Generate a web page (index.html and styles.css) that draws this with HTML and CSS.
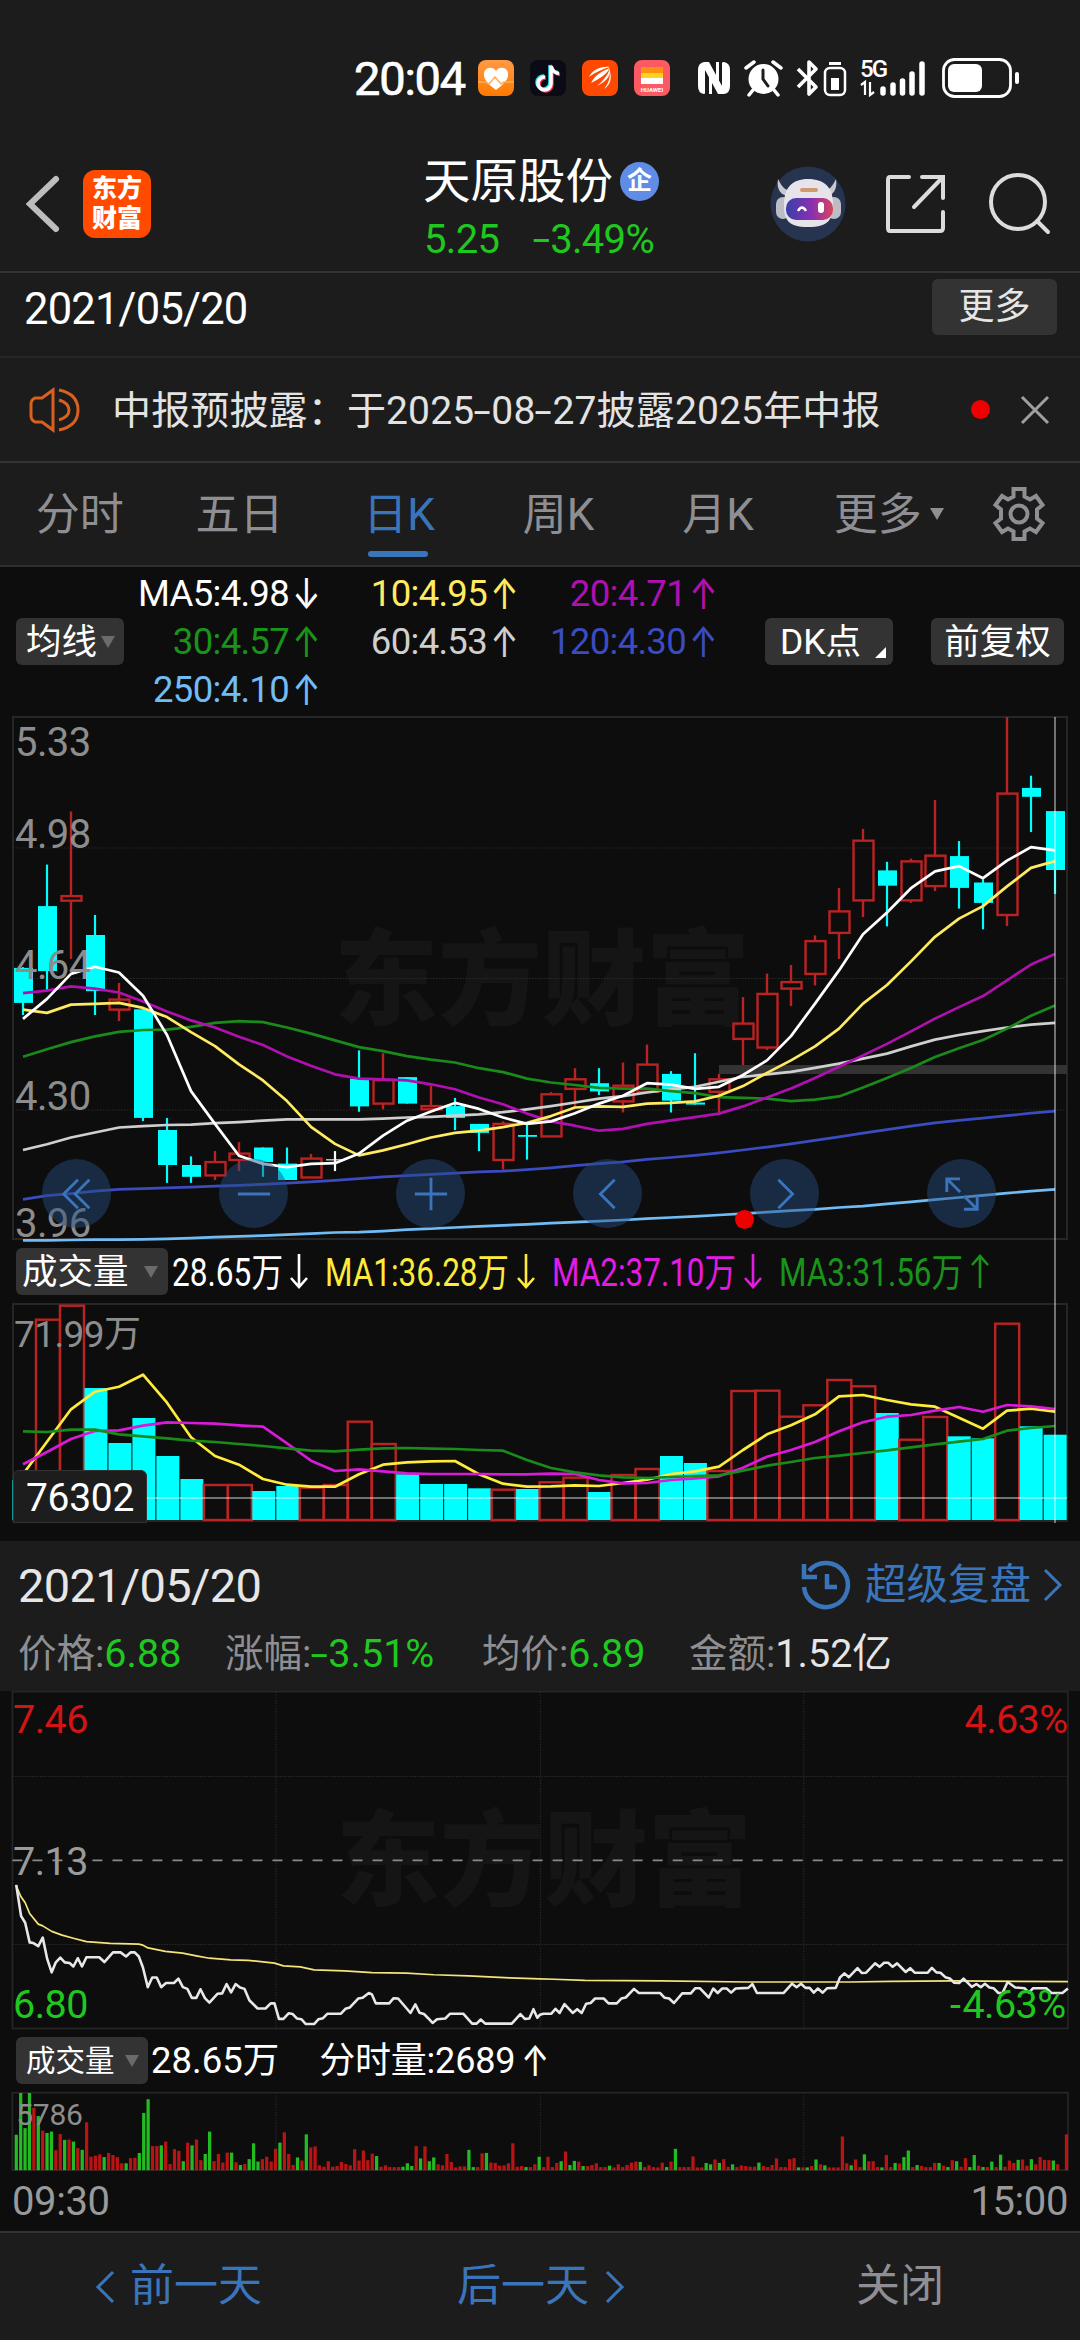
FILE: index.html
```html
<!doctype html>
<html lang="zh-CN">
    <head>
        <meta charset="UTF-8" />
        <meta name="viewport" content="width=device-width, initial-scale=1.0" />
        <title>天原股份 5.25 -3.49%</title>
        <link rel="stylesheet" href="styles.css">
    </head>
    <body>
        <!-- Status bar -->
        <div class="status">
            <span class="clock">20:04</span>
            <div class="apps">
                <svg width="36" height="36" viewBox="0 0 36 36">
                    <defs><linearGradient id="health" x1="0" y1="0" x2="0" y2="1"><stop offset="0" stop-color="#ff9a45" /><stop offset="1" stop-color="#ff7a00" /></linearGradient></defs>
                    <rect width="36" height="36" rx="8" fill="url(#health)" />
                    <path d="M18 30C10 24 5 19 6 13c1-6 9-7 12-2 3-5 11-4 12 2 1 6-4 11-12 17z" fill="#fff" />
                    <path d="M0 22h8l3 2 6-7 6 7 3-2h10" fill="none" stroke="#ffb060" stroke-width="1.6" />
                </svg>
                <svg width="36" height="36" viewBox="0 0 36 36">
                    <rect width="36" height="36" rx="8" fill="#0b0b16" />
                    <g fill="none" stroke-width="3.600">
                        <path d="M14 16a6.500 6.500 0 1 0 6 6.500V5c1 5 4 7 8 7.500" stroke="#25e0e6" />
                        <path d="M16 18a6.500 6.500 0 1 0 6 6.500V7c1 5 4 7 8 7.500" stroke="#fb2a55" />
                        <path d="M15 17a6.500 6.500 0 1 0 6 6.500V6c1 5 4 7 8 7.500" stroke="#fff" />
                    </g>
                </svg>
                <svg width="36" height="36" viewBox="0 0 36 36">
                    <rect width="36" height="36" rx="8" fill="#ff4800" />
                    <path d="M7 17C10 10 19 6 28 7c-8 2-14 5-21 10zM9 23c4-8 11-12 19-15-4 7-11 11-19 15zM15 26c6-5 10-10 13-17 1 8-5 13-13 17zM22 29c4-5 6-10 6-17 2 7 0 13-6 17z" fill="#fff" />
                </svg>
                <svg width="36" height="36" viewBox="0 0 36 36">
                    <rect width="36" height="36" rx="8" fill="#fb5a62" />
                    <path d="M7 7h22v6H7z" fill="#ff9014" /><path d="M7 13h22v5H7z" fill="#ffd21c" /><path d="M7 18h22v6H7z" fill="#fff" />
                    <text x="18" y="31.500" class="tiny">HUAWEI</text>
                </svg>
            </div>
            <svg class="sys" width="330" height="44" viewBox="0 0 330 44">
                <!-- nfc -->
                <path d="M8 6q-6 1-6 8v16q0 7 6 8 1 0 1-1V14l13 24h6q6-1 6-8V14q0-7-6-8-2 0-2 1v23L13 6z" fill="#fff" />
                <path d="M13 12v26h3V18zM20 6v20l3 6V6z" fill="#fff" />
                <!-- alarm -->
                <circle cx="67.500" cy="23" r="15" fill="#fff" />
                <path d="M50 12l8-6M77 6l8 6M57 34l-4 5M78 34l4 5" stroke="#fff" stroke-width="3.500" stroke-linecap="round" />
                <path d="M67 14v9l5 7" fill="none" stroke="#1c1c1c" stroke-width="3" stroke-linecap="round" />
                <!-- bluetooth -->
                <path d="M102 13l18 18-7 7V6l7 7-18 18" fill="none" stroke="#fff" stroke-width="3.600" stroke-linejoin="round" />
                <rect x="129" y="12" width="20" height="27" rx="5" fill="none" stroke="#fff" stroke-width="2.500" />
                <path d="M133 6h12v3h-12zM135 22h8v12h-8z" fill="#fff" />
                <!-- signal -->
                <text x="164" y="21" class="net">5G</text>
                <path d="M165 29l4-3v13M174 26v13l4-3" fill="none" stroke="#fff" stroke-width="2.200" />
                <path d="M187 33v4M197 29v8M206.500 25v12M216 18v19M226 8v29" stroke="#fff" stroke-width="5.500" stroke-linecap="round" />
                <!-- battery -->
                <rect x="247.500" y="3.500" width="67" height="37" rx="11" fill="none" stroke="#fff" stroke-width="2.800" />
                <rect x="252" y="8" width="34" height="28" rx="6" fill="#fff" />
                <rect x="319" y="16" width="4" height="12" rx="2" fill="#fff" />
            </svg>
        </div>

        <!-- Title bar -->
        <header class="header">
            <svg class="back" width="36" height="60" viewBox="0 0 36 60"><path d="M31 5L5 30l26 25" /></svg>
            <div class="logo">东方<br>财富</div>
            <div class="title">
                <div class="name">天原股份<span class="ent">企</span></div>
                <div class="price"><span>5.25</span><span><u>-</u>3.49%</span></div>
            </div>
            <svg class="robot" width="76" height="76" viewBox="0 0 76 76">
                <defs><linearGradient id="visor"><stop offset="0" stop-color="#3b3fa8" /><stop offset=".55" stop-color="#8a2fb0" /><stop offset="1" stop-color="#d8455c" /></linearGradient></defs>
                <circle cx="38" cy="38" r="37.500" fill="#26344f" />
                <path d="M8 13c-2 11 4 18 13 17l2-5c-8 0-11-4-15-12zM66 13c2 11-4 18-12 17l-2-5c7 0 10-4 14-12z" fill="#c9c9cf" />
                <rect x="6" y="31" width="14" height="22" rx="7" fill="#bdbdc6" />
                <rect x="57" y="31" width="14" height="22" rx="7" fill="#bdbdc6" />
                <path d="M38 13c17 0 25 9 25 25 0 15-4 23-25 23S14 53 14 38c0-16 8-25 24-25z" fill="#e6e4ea" />
                <rect x="30" y="22" width="18" height="4" rx="2" fill="#cf9a70" />
                <rect x="16" y="32" width="47" height="22" rx="10" fill="url(#visor)" />
                <path d="M28 45q4-7 8 0" fill="none" stroke="#fff" stroke-width="2.500" />
                <rect x="48" y="36" width="6" height="11" rx="3" fill="#fff" />
            </svg>
            <svg class="tool" width="62" height="62" viewBox="0 0 62 62"><path d="M24 4H5q-2 0-2 3v48q0 3 2 3h50q3 0 3-3V39M37 4h21v21M57 5L29 34" /></svg>
            <svg class="tool find" width="62" height="62" viewBox="0 0 62 62"><circle cx="29" cy="29" r="27" /><path d="M48 48l11 11" /></svg>
        </header>

        <div class="daterow">
            <span>2021/05/20</span>
            <button class="more">更多</button>
        </div>

        <div class="notice">
            <svg class="horn" width="52" height="46" viewBox="0 0 52 46"><path d="M24 3L13 11H6q-4 2-4 6v12q0 4 4 6h7l11 8zM30 13q10 3 10 10T30 33M30 3q19 4 19 20T30 43" /></svg>
            <span class="msg">中报预披露：于2025<u>-</u>08<u>-</u>27披露2025年中报</span>
            <i class="dot"></i>
            <svg class="close" width="30" height="30" viewBox="0 0 30 30"><path d="M2 2l26 26M28 2L2 28" /></svg>
        </div>

        <nav class="tabs">
            <a>分时</a><a>五日</a><a class="on">日K</a><a>周K</a><a>月K</a><a>更多<i class="tri"></i></a>
            <svg width="54" height="54" viewBox="0 0 54 54">
                <path d="M21.500 2h11v7.500l5.500 3 6-3.500 6.500 9-5.500 4.500v9l5.500 4.500-6.500 9-6-3.500-5.500 3V52h-11v-7.500l-5.500-3-6 3.500-6.500-9L9 31.500v-9L3.500 18l6.500-9 6 3.500 5.500-3z" />
                <circle cx="27" cy="27" r="8.500" />
            </svg>
        </nav>

        <!-- Moving averages -->
        <section class="ma">
            <button class="chip">均线<i class="tri"></i></button>
            <div class="avgs">
                <span class="white">MA5:4.98<b>↓</b></span><span class="yellow">10:4.95<b>↑</b></span><span class="purple">20:4.71<b>↑</b></span>
                <span class="green">30:4.57<b>↑</b></span><span class="gray">60:4.53<b>↑</b></span><span class="blue">120:4.30<b>↑</b></span>
                <span class="sky">250:4.10<b>↑</b></span>
            </div>
            <button class="chip dk">DK点<i class="corner"></i></button>
            <button class="chip fq">前复权</button>
        </section>

        <section class="charts">
            <svg id="kline" width="1080" height="524" viewBox="0 0 1080 524"></svg>
            <div class="vlegend">
                <button class="chip">成交量<i class="tri"></i></button>
                <svg width="900" height="63" viewBox="0 0 900 63">
                    <g class="squeeze">
                        <text x="2" y="46" textLength="111" lengthAdjust="spacingAndGlyphs" fill="#fff">28.65万</text>
                        <text x="155" y="46" textLength="184" lengthAdjust="spacingAndGlyphs" fill="#ffeb3b">MA1:36.28万</text>
                        <text x="382" y="46" textLength="184" lengthAdjust="spacingAndGlyphs" fill="#e31be3">MA2:37.10万</text>
                        <text x="609" y="46" textLength="184" lengthAdjust="spacingAndGlyphs" fill="#1a931a">MA3:31.56万</text>
                    </g>
                    <g fill="none" stroke-width="2.600">
                        <path d="M129 14v33M121 38l8 9 8-9" stroke="#fff" />
                        <path d="M356 14v33M348 38l8 9 8-9" stroke="#ffeb3b" />
                        <path d="M583 14v33M575 38l8 9 8-9" stroke="#e31be3" />
                        <path d="M810 48V15M802 25l8-9 8 9" stroke="#1a931a" />
                    </g>
                </svg>
            </div>
            <svg id="volume" width="1080" height="238" viewBox="0 0 1080 238"></svg>
            <div class="cross"></div>
            <div class="tag">76302</div>
            <div class="pad">
                <button><svg viewBox="0 0 40 40"><path d="M21 5L6 20l15 15M33 5L18 20l15 15" /></svg></button>
                <button><svg viewBox="0 0 40 40"><path d="M3 20h34" /></svg></button>
                <button><svg viewBox="0 0 40 40"><path d="M3 20h34M20 3v34" /></svg></button>
                <button><svg viewBox="0 0 40 40"><path d="M27 5L12 20l15 15" /></svg></button>
                <button><svg viewBox="0 0 40 40"><path d="M13 5l15 15-15 15" /></svg></button>
                <button><svg viewBox="0 0 40 40"><path d="M4 18V4h14M4 4l14 14M36 22v14H22M22 22l14 14" /></svg></button>
            </div>
            <i class="dot mark"></i>
        </section>

        <!-- Replay of the selected day -->
        <section class="panel">
            <div class="line">
                <span class="day">2021/05/20</span>
                <a class="replay">
                    <svg width="50" height="50" viewBox="0 0 50 50"><path d="M3 27a22 22 0 1 0 5-16M3 4v13h13" /><path d="M26 14v13h10" /></svg>
                    超级复盘
                    <svg width="20" height="34" viewBox="0 0 20 34" class="thin"><path d="M2 2l15 15L2 32" /></svg>
                </a>
            </div>
            <div class="stats">
                <span>价格:<em>6.88</em></span>
                <span>涨幅:<em><u>-</u>3.51%</em></span>
                <span>均价:<em>6.89</em></span>
                <span>金额:<em class="plain">1.52亿</em></span>
            </div>
        </section>

        <svg id="minute" width="1080" height="338" viewBox="0 0 3136 981.500"></svg>
        <div class="mlegend">
            <button class="chip">成交量<i class="tri"></i></button>
            <span>28.65万</span>
            <span class="second">分时量:2689<b>↑</b></span>
        </div>
        <svg id="ticks" width="1080" height="79" viewBox="0 0 3136 229.400"></svg>
        <div class="axis"><span>09:30</span><span>15:00</span></div>

        <footer class="footer">
            <a class="prev"><svg width="20" height="34" viewBox="0 0 20 34"><path d="M17 2L2 17l15 15" /></svg>前一天</a>
            <a class="next">后一天<svg width="20" height="34" viewBox="0 0 20 34"><path d="M2 2l15 15L2 32" /></svg></a>
            <a class="shut">关闭</a>
        </footer>

        <script src="charts.js"></script>
    </body>
</html>
```
FILE: styles.css
```css
* {
    box-sizing: border-box;
}
body {
    margin: 0;
    width: 1080px;
    height: 2340px;
    overflow: hidden;
    background-color: #0d0d0d;
    color: #fff;
    font-family: Roboto, "Noto Sans CJK SC", sans-serif;
    font-size: 40px;
}
svg {
    display: block;
    flex: none;
    overflow: visible;
}
button {
    font-family: inherit;
    border: none;
    padding: 0;
    color: inherit;
}
i,
em,
b {
    font-style: normal;
    font-weight: normal;
}
b {
    font-family: Inter, sans-serif;
}
/* wide minus sign */
u {
    display: inline-block;
    width: 17px;
    text-decoration: none;
    transform: scaleX(1.6);
    transform-origin: 1px 50%;
}

/* Status bar */
.status {
    display: flex;
    align-items: center;
    height: 136px;
    padding: 20px 0 0 354px;
    background-color: #1c1c1c;
}
.clock {
    width: 124px;
    font-size: 47px;
    letter-spacing: -1.2px;
    -webkit-text-stroke: .7px #fff;
}
.apps {
    display: flex;
    gap: 16px;
    width: 218px;
}
.tiny {
    font-size: 6px;
    font-weight: bold;
    fill: #fff;
    text-anchor: middle;
}
.net {
    font-size: 24px;
    font-weight: 500;
    fill: #fff;
    letter-spacing: -2px;
}

/* Title bar */
.header {
    display: flex;
    align-items: center;
    height: 137px;
    padding: 0 27px 0 25px;
    background-color: #1c1c1c;
    border-bottom: 2px solid #333;
}
.back path {
    fill: none;
    stroke: #bdbdbd;
    stroke-width: 6;
    stroke-linecap: round;
}
.logo {
    width: 68px;
    height: 68px;
    margin: 0 0 0 22px;
    padding-top: 4px;
    border-radius: 12px;
    background-color: #ff4a00;
    font-size: 25px;
    font-weight: 900;
    line-height: 30px;
    text-align: center;
}
.title {
    width: 240px;
    margin-left: 272px;
    height: 136px;
}
.name {
    display: flex;
    align-items: center;
    font-size: 47.5px;
    line-height: 60px;
    padding-top: 16px;
    white-space: nowrap;
}
.ent {
    width: 39px;
    height: 39px;
    margin-left: 7px;
    border-radius: 50%;
    background-color: #5f8de6;
    font-size: 25px;
    font-weight: bold;
    line-height: 37px;
    text-align: center;
}
.price {
    display: flex;
    gap: 34px;
    padding-left: 1px;
    font-size: 40px;
    line-height: 56px;
    color: #1fc81f;
    letter-spacing: -.7px;
}
.robot {
    margin-left: 107px;
}
.tool {
    margin-left: 39px;
}
.find {
    margin-left: 42px;
}
.tool path,
.tool circle {
    fill: none;
    stroke: #dcdcdc;
    stroke-width: 4;
    stroke-linecap: round;
}

/* Date and notice */
.daterow {
    display: flex;
    justify-content: space-between;
    height: 85px;
    padding: 6px 23px 0 24px;
    background-color: #1c1c1c;
    border-bottom: 2px solid #262626;
    font-size: 43.5px;
    line-height: 61px;
    letter-spacing: -.8px;
}
.more {
    width: 125px;
    height: 56px;
    border-radius: 6px;
    background-color: #333;
    color: #e6e6e6;
    font-size: 36px;
    line-height: 52px;
}
.notice {
    display: flex;
    align-items: center;
    height: 105px;
    padding: 0 30px 0 29px;
    background-color: #1c1c1c;
    border-bottom: 2px solid #333;
    color: #e3e3e3;
    font-size: 39px;
}
.horn path {
    fill: none;
    stroke: #d9601e;
    stroke-width: 3;
}
.msg {
    flex: 1;
    padding: 0 0 6px 31px;
    white-space: nowrap;
    letter-spacing: .15px;
}
.dot {
    width: 19px;
    height: 19px;
    border-radius: 50%;
    background-color: #ee0000;
}
.close {
    margin-left: 30px;
}
.close path {
    stroke: #a0a0a0;
    stroke-width: 3;
}

/* Tabs */
.tabs {
    display: flex;
    align-items: center;
    height: 104px;
    background-color: #1c1c1c;
    border-bottom: 2px solid #2e2e2e;
    color: #8e8e93;
    font-size: 44px;
}
.tabs a {
    position: relative;
    width: 159.6px;
    height: 100%;
    line-height: 105px;
    text-align: center;
}
.tabs .on {
    color: #3a75bb;
}
.tabs .on::after {
    content: "";
    position: absolute;
    left: 49px;
    bottom: 8px;
    width: 60px;
    height: 6px;
    border-radius: 3px;
    background-color: #3a75bb;
}
.tabs svg {
    margin-left: 34px;
    fill: none;
    stroke: #8e8e93;
    stroke-width: 4;
}
.tri {
    display: inline-block;
    border: 7.5px solid transparent;
    border-top: 12px solid #6b6b6b;
    border-bottom: none;
}
.tabs .tri {
    position: absolute;
    top: 45px;
    left: 132px;
    border-top-color: #8e8e93;
}

/* Moving averages */
.chip {
    display: flex;
    align-items: center;
    height: 47px;
    border-radius: 6px;
    background-color: #333;
    font-size: 35.5px;
    line-height: 44px;
    white-space: nowrap;
}
.ma {
    display: flex;
    align-items: center;
    height: 149px;
    padding: 0 16px;
}
.ma .chip:first-child {
    width: 108px;
    padding-left: 10px;
    gap: 4px;
}
.avgs {
    display: grid;
    grid-template-columns: 196px 198px 199px;
    grid-auto-rows: 48px;
    width: 641px;
    font-size: 36.5px;
    line-height: 48px;
    letter-spacing: -.7px;
}
.avgs span {
    display: flex;
    justify-content: flex-end;
    white-space: nowrap;
}
.avgs b,
.mlegend b {
    width: 31px;
    text-align: right;
    font-size: 34px;
    transform: scaleY(1.25);
}
.white { color: #fff; }
.yellow { color: #ffeb62; }
.purple { color: #b010b0; }
.green { color: #1a931a; }
.gray { color: #cfcfcf; }
.blue { color: #3a4cc0; }
.sky { color: #72bcf5; }
.dk {
    position: relative;
    width: 128px;
    padding-left: 15px;
}
.corner {
    position: absolute;
    right: 7px;
    bottom: 7px;
    border-left: 11px solid transparent;
    border-bottom: 11px solid #fff;
}
.fq {
    width: 133px;
    margin-left: 38px;
    justify-content: center;
}

/* Charts */
.charts {
    position: relative;
}
.scale {
    font-size: 40px;
    fill: #8d8d8d;
    letter-spacing: -.6px;
}
.frame {
    fill: none;
    stroke: #262626;
    stroke-width: 2;
}
.water {
    font-size: 104px;
    font-weight: 900;
    fill: #151515;
}
.vlegend {
    display: flex;
    align-items: center;
    height: 63px;
    padding-left: 16px;
}
.vlegend .chip {
    width: 152px;
    padding: 0 10px 0 6px;
    justify-content: space-between;
}
.vlegend svg {
    margin-left: 2px;
}
.squeeze {
    font-size: 39px;
}
.cross {
    position: absolute;
    left: 1054px;
    top: 1px;
    width: 2px;
    height: 806px;
    background-color: rgba(255, 255, 255, .42);
}
.tag {
    position: absolute;
    left: 13px;
    top: 754px;
    width: 134px;
    height: 53px;
    padding-left: 12px;
    border: 1px solid #333;
    border-radius: 6px 6px 0 0;
    background-color: #1d1d1d;
    font-size: 39px;
    line-height: 54px;
    letter-spacing: -.3px;
}
.pad {
    position: absolute;
    left: 42px;
    top: 443px;
    display: flex;
    gap: 108px;
}
.pad button {
    width: 69px;
    height: 69px;
    border-radius: 50%;
    background-color: rgba(38, 78, 128, .48);
}
.pad svg {
    width: 38px;
    height: 38px;
    margin: 0 auto;
    fill: none;
    stroke: #3a75bb;
    stroke-width: 3;
}
.mark {
    position: absolute;
    left: 735px;
    top: 494px;
}

/* Day panel */
.panel {
    height: 150px;
    background-color: #1c1c1c;
    padding: 13px 17px 0 18px;
}
.line {
    display: flex;
    justify-content: space-between;
    align-items: center;
    height: 62px;
}
.day {
    font-size: 47px;
    color: #e6e6e6;
    letter-spacing: -.7px;
}
.replay {
    display: flex;
    align-items: center;
    gap: 14px;
    height: 60px;
    line-height: 58px;
    color: #3a75bb;
    font-size: 41.5px;
}
.replay svg {
    fill: none;
    stroke: #3a75bb;
    stroke-width: 4.5;
}
.replay .thin,
.footer svg {
    stroke-width: 3;
}
.replay .thin {
    margin-left: -2px;
}
.stats {
    display: flex;
    height: 66px;
    line-height: 75px;
    font-size: 38.5px;
    color: #8e8e93;
}
.stats span {
    width: 207px;
    white-space: nowrap;
}
.stats span:nth-child(2) {
    width: 257px;
}
.stats em {
    color: #1fc81f;
    font-size: 39.5px;
}
.stats .plain {
    color: #e6e6e6;
}

/* Minute chart */
.mlegend {
    display: flex;
    align-items: center;
    height: 63px;
    padding-left: 16px;
    font-size: 36.5px;
    line-height: 56px;
}
.mlegend .chip {
    width: 132px;
    padding: 0 9px 0 10px;
    margin-right: 3px;
    justify-content: space-between;
    font-size: 29.5px;
}
.mlegend .second {
    display: flex;
    margin-left: 40px;
    font-size: 36px;
    letter-spacing: -.2px;
}
.mlegend b {
    width: 34px;
    line-height: 56px;
}
.axis {
    display: flex;
    justify-content: space-between;
    height: 60px;
    padding: 0 12px;
    color: #9a9a9a;
    line-height: 61px;
    letter-spacing: -.4px;
}

.footer {
    display: flex;
    align-items: center;
    height: 109px;
    background-color: #1c1c1c;
    border-top: 2px solid #333;
    color: #3a75bb;
    font-size: 44px;
    line-height: 101px;
}
.footer a {
    display: flex;
    align-items: center;
    gap: 14px;
    height: 107px;
}
.footer svg {
    fill: none;
    stroke: #3a75bb;
}
.footer .prev {
    width: 361px;
    padding-left: 96px;
}
.footer .next {
    width: 495px;
    padding-left: 96px;
    gap: 16px;
}
.footer .shut {
    color: #8e8e93;
}
```
FILE: charts.js
```js
const RED = "#b92323";
const CYAN = "#00ffff";

const CANDLES = `c748,750,848,882 c461,577,759,812 r312,549,562,725 c602,658,815,882 r792,839,867,899 c866,866,1170,1179
c1170,1204,1302,1352 c1278,1302,1335,1352 r1263,1294,1331,1344 r1238,1270,1288,1319 c1253,1253,1294,1335 c1253,1298,1344,1344
r1271,1284,1337,1337 w1263,1286,1289,1319 c981,1060,1138,1153 r989,1064,1130,1146 c1056,1056,1130,1130 r1080,1137,1146,1146
c1114,1137,1170,1204 c1187,1187,1212,1263 r1180,1187,1288,1315 c1187,1218,1223,1287 r1098,1104,1222,1222 r1031,1062,1089,1139
c1031,1073,1096,1106 r1015,1080,1124,1155 r965,1021,1097,1097 c1039,1047,1122,1155 c989,1127,1133,1133 r1047,1062,1097,1155
r832,906,949,1022 r766,823,973,980 r742,790,808,857 r659,675,767,799 r526,592,652,725 r361,394,561,608 c453,477,520,634
r444,452,561,568 r280,436,521,535 c395,437,526,584 c502,511,568,642 r48,262,602,633 c212,246,271,370 c311,311,476,543`;

const AVERAGES = [
    ["#ffffff", [893,837,767,747,763,828,938,1095,1187,1276,1299,1308,1299,1297,1270,1220,1178,1152,1128,1145,1169,1187,1180,1157,1130,1108,1073,1077,1089,1083,1050,1009,941,850,757,656,595,527,480,465,499,450,412,421]],
    ["#ffeb62", [867,876,853,851,848,862,888,930,969,1020,1065,1123,1195,1243,1275,1261,1244,1225,1212,1206,1196,1184,1165,1141,1138,1139,1130,1128,1124,1108,1081,1044,1009,970,920,850,798,732,663,612,577,522,470,451]],
    ["#b010b0", [821,814,802,808,819,844,872,897,917,943,966,998,1024,1048,1060,1062,1065,1076,1090,1113,1132,1158,1180,1192,1206,1201,1187,1177,1168,1158,1138,1113,1088,1058,1027,995,963,928,892,860,829,785,741,711]],
    ["#1a8a1a", [999,978,958,942,929,924,923,915,904,899,902,917,934,953,972,983,997,1007,1015,1031,1042,1060,1071,1078,1086,1088,1088,1095,1101,1112,1114,1116,1123,1119,1110,1085,1058,1030,1000,975,952,920,884,855]],
    ["#cfcfcf", [1260,1244,1225,1211,1197,1193,1190,1189,1185,1182,1178,1174,1174,1174,1174,1172,1169,1167,1164,1160,1154,1146,1137,1127,1116,1109,1099,1090,1083,1069,1055,1048,1041,1030,1018,1004,990,970,951,938,927,917,909,904]],
    ["#3a4cc0", [1398,1388,1382,1375,1370,1368,1366,1364,1361,1359,1356,1353,1349,1345,1340,1335,1332,1328,1325,1321,1319,1315,1310,1304,1298,1293,1286,1281,1275,1268,1260,1252,1243,1233,1223,1213,1203,1193,1184,1177,1171,1164,1157,1151]],
    ["#72bcf5", [1513,1513,1512,1511,1511,1510,1509,1507,1504,1502,1500,1497,1494,1491,1490,1487,1483,1480,1477,1474,1471,1468,1465,1462,1459,1456,1452,1449,1446,1442,1438,1434,1430,1426,1421,1417,1411,1405,1399,1393,1387,1381,1375,1370]],
];

const VOLUMES = `c720 r236 r194 c444 c609 c534 c648 c717 r732 r732 c753 c738 r740 r732 r542 r609 c703 c732 c732 c745 r746 c747
r724 r710 c756 r702 r684 c648 c669 r690 r450 r449 r527 r493 r417 r436 c519 r596 r528 c589 c595 r248 c559 c584`;

const VOLUME_AVERAGES = [
    ["#ffeb3b", [703,605,508,455,440,404,488,592,648,674,717,734,740,740,703,674,667,664,663,703,731,740,739,736,738,729,719,702,694,680,630,583,556,523,469,465,480,493,500,533,566,512,506,515]],
    ["#d81bd8", [673,636,597,573,571,557,547,549,551,556,560,610,662,693,688,694,700,702,702,702,703,703,701,702,720,730,729,720,715,709,683,650,630,606,574,547,530,525,512,501,515,495,499,507]],
    ["#1a8a1a", [574,576,569,569,583,589,595,602,606,612,618,625,632,634,629,625,624,626,627,630,632,660,684,697,706,712,714,711,708,706,692,677,666,654,647,639,631,622,613,605,597,572,564,558]],
];

// Price and average of the day, one "x,y" per turning point
const PRICE = `47,563 54,608 61,653 73,673 86,730 97,732 111,741 124,716 137,778 150,817 162,788 175,774 188,788 202,790 213,800 226,776
238,800 251,773 288,773 303,787 328,759 350,759 366,771 379,759 391,759 403,771 415,803 429,860 442,832 455,832 468,860 482,848 505,848
518,835 531,860 544,865 557,891 570,891 582,866 595,892 608,905 632,879 645,878 658,851 671,875 684,851 697,861 710,865 724,898 748,922
771,922 786,907 797,907 810,952 823,952 838,936 850,938 862,951 875,953 888,967 912,967 925,953 938,950 951,937 990,937 1003,923
1016,919 1040,893 1053,891 1071,877 1080,881 1091,907 1130,907 1143,892 1156,893 1192,935 1206,910 1218,934 1231,938 1244,951 1256,964
1269,953 1293,951 1307,937 1345,937 1371,966 1384,966 1396,954 1409,966 1486,966 1511,938 1524,952 1537,951 1549,924 1560,949 1568,940
1578,937 1601,937 1613,923 1625,935 1639,909 1663,935 1676,924 1689,935 1702,908 1715,906 1728,893 1753,893 1767,907 1791,907 1804,893
1817,890 1841,865 1855,877 1917,877 1930,891 1943,893 1957,906 1981,878 2006,878 2019,863 2032,863 2058,890 2071,864 2084,877 2097,864
2110,864 2123,876 2136,864 2173,862 2185,851 2198,877 2275,877 2300,850 2313,860 2326,850 2339,862 2351,862 2363,876 2375,864 2389,876
2402,863 2427,862 2439,832 2452,820 2465,831 2490,805 2503,819 2515,818 2541,791 2554,801 2567,789 2579,789 2592,801 2605,791 2630,816
2643,805 2656,818 2694,818 2706,804 2719,817 2731,818 2745,831 2758,835 2771,847 2785,848 2798,835 2822,859 2835,851 2848,860 2860,850
2873,861 2885,863 2899,877 2911,877 2926,845 2948,861 2975,863 2988,876 3000,863 3038,863 3053,877 3085,877 3101,864`;
const MEAN = `47,566 60,596 73,615 86,646 111,677 124,682 150,698 180,709 213,718 251,728 320,733 403,735 415,738 430,746 480,756 530,761
570,769 608,776 670,781 720,782 797,790 823,798 872,801 912,810 1000,813 1080,818 1180,819 1260,824 1360,827 1480,833 1568,836 1608,837
1698,840 1918,842 2168,845 2468,845 2588,843 2768,842 3101,844`;

const TICKS = `g103 g224 g122 g224 r181 g157 r115 g108 g112 r58 r105 g88 r89 g83 r64 g59 r139 r39 r42 r46 g38 r50 r44 r38 r20 g20 r35 r36 g50
g166 g206 r70 r70 g72 r83 r18 r61 r56 g26 r80 g72 r89 r29 g47 g112 r26 r47 r22 r51 g51 r23 g15 r18 g32 g78 g25 r32 r39 r25 r62 g80 r110
r47 r15 g37 r28 g104 r66 r69 r14 r10 r26 r10 r12 r24 r18 r14 r61 r28 r57 r29 r48 g41 r10 r14 r9 r9 r9 g10 g20 g12 r70 g34 r69 g26 g37 r17
r14 r47 r24 r8 r11 r11 g59 g9 r9 r49 g50 r22 r21 r13 r14 r20 r78 r10 r12 g9 r9 r17 g39 r9 r39 r9 r21 g26 r54 g15 g27 r25 g12 r12 r15 r20 r9
r9 g13 r8 r17 r9 r15 r22 r25 g24 r9 r14 r9 r8 r22 g9 r25 g62 r9 r9 r9 r40 r8 r8 g21 g17 r31 g21 r32 r10 g17 r9 r14 r12 r10 r10 g22 r12 r9
r15 r34 r9 r9 r32 r35 g8 r8 g8 r12 g31 r17 g14 r8 r8 r8 r98 r20 g14 r31 r9 g46 r26 r26 r9 g8 r44 r9 g21 r19 g38 g57 r9 g15 r12 r9 r9 r21
g21 r13 g9 r29 g26 r10 r35 g9 g44 r13 g9 r9 g25 r9 g45 r10 r28 r21 g30 r31 r13 g32 r17 r38 r30 r29 g28 r17 r0 r104`;

const rect = (x, y, w, h, attrs) => `<rect x="${x}" y="${y}" width="${w}" height="${h}" ${attrs} />`;
const line = (x1, y1, x2, y2, attrs) => `<path d="M${x1} ${y1}L${x2} ${y2}" fill="none" ${attrs} />`;
const poly = (points, color, width) => `<polyline points="${points}" fill="none" stroke="${color}" stroke-width="${width}" stroke-linejoin="round" />`;
const label = (x, y, text, attrs = "") => `<text x="${x}" y="${y}" class="scale" ${attrs}>${text}</text>`;
const centre = (i) => 23 + i * 24;

function drawKline() {
    const y = (v) => +(v / 2.8 - 16).toFixed(1);
    let out = `<text x="334" y="301" class="water">东方财富</text>`;
    out += rect(13, 1, 1054, 522, 'class="frame"');
    [132, 262.5, 394].forEach((g) => (out += line(13, g, 1067, g, 'stroke="#2b2b2b" stroke-width="1" stroke-dasharray="1.5 1.5"')));
    out += rect(719, 349, 348, 9, 'fill="#333"');

    CANDLES.split(/\s+/).forEach((item, i) => {
        const [high, top, bottom, low] = item.slice(1).split(",").map((v) => y(Number(v)));
        const x = centre(i);
        if (item[0] === "r") {
            const body = Math.max(bottom - top, 2);
            out += line(x, high, x, top, `stroke="${RED}" stroke-width="2.4"`) + line(x, bottom, x, low, `stroke="${RED}" stroke-width="2.4"`);
            out += rect(x - 9.5, top, 20, body, `fill="none" stroke="${RED}" stroke-width="2.4"`);
        } else {
            const color = item[0] === "w" ? "#fff" : CYAN;
            out += line(x, high, x, low, `stroke="${color}" stroke-width="2.2"`) + rect(x - 9, top, 19, bottom - top, `fill="${color}"`);
        }
    });
    // slowest average first, MA5 stays on top
    [...AVERAGES].reverse().forEach(([color, values]) => {
        out += poly(values.map((v, i) => `${centre(i)},${y(v)}`).join(" "), color, 2.7);
    });
    [["5.33", 39.5], ["4.98", 131.5], ["4.64", 262.5], ["4.30", 393.5], ["3.96", 520.5]].forEach(([t, ty]) => (out += label(15, ty, t)));
    document.getElementById("kline").innerHTML = out;
}

function drawVolume() {
    const y = (v) => +(v / 3 - 63).toFixed(1);
    let out = rect(13, 1, 1054, 217, 'class="frame"');
    VOLUMES.split(/\s+/).forEach((item, i) => {
        const top = y(Number(item.slice(1)));
        const x = 12.5 + i * 23.98;
        out += item[0] === "r"
            ? rect(x - 0.5, top + 1, 24, 216 - top, `fill="none" stroke="${RED}" stroke-width="2.4"`)
            : rect(x, top, 23, 217 - top, `fill="${CYAN}"`);
    });
    VOLUME_AVERAGES.forEach(([color, values]) => {
        out += poly(values.map((v, i) => `${centre(i)},${y(v)}`).join(" "), color, 2.7);
    });
    out += line(147, 195, 1067, 195, 'stroke="#fff" stroke-opacity=".42" stroke-width="2"');
    out += label(14, 44, "71.99万", 'style="font-size: 37px"');
    document.getElementById("volume").innerHTML = out;
}

function drawMinute() {
    const size = (px) => `style="font-size: ${px * 2.904}px; letter-spacing: ${px > 50 ? 0 : -1.7}px"`;
    let out = `<text x="976" y="601" class="water" ${size(104)}>东方财富</text>`;
    out += rect(36, 2, 3065, 978, 'class="frame" style="stroke-width: 5px"');
    [801, 1569, 2334].forEach((x) => (out += line(x, 2, x, 980, 'stroke="#2b2b2b" stroke-width="3" stroke-dasharray="4 4"')));
    [248, 736].forEach((y) => (out += line(36, y, 3101, y, 'stroke="#2b2b2b" stroke-width="3" stroke-dasharray="4 4"')));
    out += line(36, 492, 3101, 492, 'stroke="#8a8a8a" stroke-width="5" stroke-dasharray="29 29.1"');
    out += poly(MEAN, "#f5e478", 5) + poly(PRICE, "#e8e8e8", 7.5);
    [[38, 122, "7.46", "#d21414"], [38, 534, "7.13", "#9a9a9a"], [38, 949, "6.80", "#1fc81f"]].forEach(([x, y, t, c]) => {
        out += `<text x="${x}" y="${y}" fill="${c}" ${size(39.5)}>${t}</text>`;
    });
    out += `<text x="3100" y="122" text-anchor="end" fill="#d21414" ${size(39.5)}>4.63%</text>`;
    out += `<text x="3100" y="949" text-anchor="end" fill="#1fc81f" ${size(39.5)}><tspan dx="-6">-</tspan><tspan dx="6">4.63%</tspan></text>`;
    document.getElementById("minute").innerHTML = out;
}

function drawTicks() {
    let out = rect(36, 2, 3065, 225, 'class="frame" style="stroke-width: 5px"');
    [801, 1569, 2334].forEach((x) => (out += line(x, 2, x, 226, 'stroke="#2b2b2b" stroke-width="3" stroke-dasharray="4 4"')));
    TICKS.split(/\s+/).forEach((item, i) => {
        const h = Number(item.slice(1));
        out += rect((42.5 + i * 12.76).toFixed(1), 227 - h, 9.5, h, `fill="${item[0] === "r" ? "#b81414" : "#22bb22"}"`);
    });
    out += label(47, 95, "5786", 'style="font-size: 87px"');
    document.getElementById("ticks").innerHTML = out;
}

drawKline();
drawVolume();
drawMinute();
drawTicks();
```
